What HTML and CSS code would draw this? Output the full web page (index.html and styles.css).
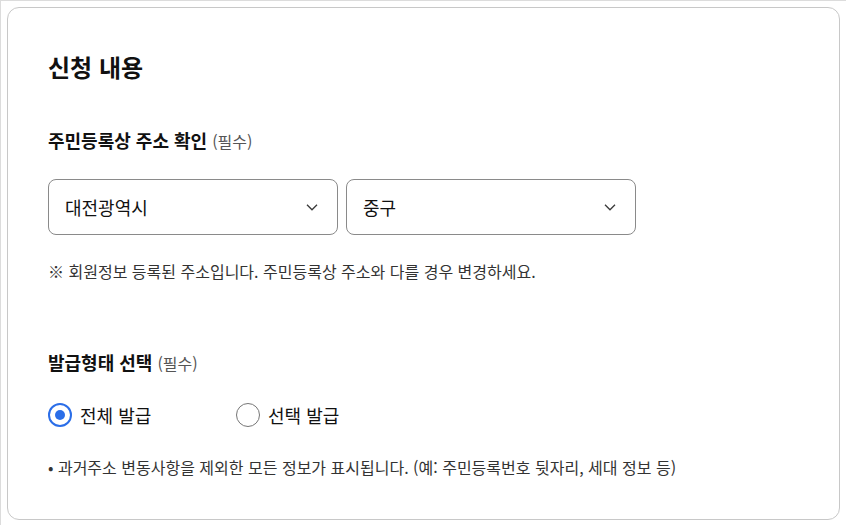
FILE: index.html
```html
<!DOCTYPE html>
<html lang="ko">
<head>
<meta charset="utf-8">
<link rel="stylesheet" href="styles.css">
</head>
<body>
<div class="frame">
  <section class="card">
    <h2 class="title">신청 내용</h2>

    <div class="field">
      <div class="label">주민등록상 주소 확인 <span class="req">(필수)</span></div>
      <div class="selects">
        <div class="select"><span>대전광역시</span>
          <svg class="chev" width="14" height="14" viewBox="0 0 14 14"><path d="M2 4.8 L7 9.8 L12 4.8" fill="none" stroke="#3a3a3a" stroke-width="1.3"/></svg>
        </div>
        <div class="select"><span>중구</span>
          <svg class="chev" width="14" height="14" viewBox="0 0 14 14"><path d="M2 4.8 L7 9.8 L12 4.8" fill="none" stroke="#3a3a3a" stroke-width="1.3"/></svg>
        </div>
      </div>
      <p class="note">※ 회원정보 등록된 주소입니다. 주민등록상 주소와 다를 경우 변경하세요.</p>
    </div>

    <div class="field field2">
      <div class="label">발급형태 선택 <span class="req">(필수)</span></div>
      <div class="radios">
        <label class="radio"><span class="dot on"></span>전체 발급</label>
        <label class="radio"><span class="dot"></span>선택 발급</label>
      </div>
      <p class="bullet">• 과거주소 변동사항을 제외한 모든 정보가 표시됩니다. (예: 주민등록번호 뒷자리, 세대 정보 등)</p>
    </div>
  </section>
</div>
</body>
</html>
```

FILE: styles.css
```css
* { box-sizing: border-box; }
html, body { margin: 0; padding: 0; background: #fff; }
body {
  font-family: "Noto Sans CJK KR", "Noto Sans", sans-serif;
  color: #1a1a1a;
  width: 846px;
  height: 525px;
  overflow: hidden;
}
.frame {
  border-top: 1px solid #dcdcdc;
  border-left: 1px solid #dcdcdc;
  height: 525px;
  padding: 6px 0 0 6px;
}
.card {
  width: 833px;
  height: 513px;
  border: 1px solid #c8c8c8;
  border-radius: 12px;
  padding: 42px 40px 0 40px;
}
.title {
  margin: 0;
  font-size: 24px;
  font-weight: 700;
  line-height: 34px;
  color: #111;
}
.field { margin-top: 43px; }
.field2 { margin-top: 66px; }
.label {
  font-size: 18px;
  font-weight: 700;
  line-height: 26px;
  color: #111;
}
.req {
  font-size: 16px;
  font-weight: 400;
  color: #555;
}
.selects {
  display: flex;
  gap: 8px;
  margin-top: 25px;
}
.select {
  width: 290px;
  height: 56px;
  border: 1px solid #8a8a8a;
  border-radius: 8px;
  display: flex;
  align-items: center;
  justify-content: space-between;
  padding: 0 18px 0 16px;
  font-size: 18px;
  color: #111;
}
.chev { display: block; }
.note {
  margin: 24px 0 0;
  font-size: 16px;
  line-height: 24px;
  color: #333;
}
.radios {
  display: flex;
  margin-top: 26px;
}
.radio {
  display: flex;
  align-items: center;
  gap: 8px;
  font-size: 18px;
  line-height: 26px;
  color: #111;
  width: 188px;
}
.dot {
  width: 24px;
  height: 24px;
  border-radius: 50%;
  border: 1.5px solid #767676;
  display: flex;
  align-items: center;
  justify-content: center;
  flex: none;
}
.dot.on { border: 2px solid #2b6ee8; }
.dot.on::after {
  content: "";
  width: 10px;
  height: 10px;
  border-radius: 50%;
  background: #2b6ee8;
}
.bullet {
  margin: 27px 0 0;
  font-size: 16px;
  line-height: 24px;
  color: #333;
}
```
